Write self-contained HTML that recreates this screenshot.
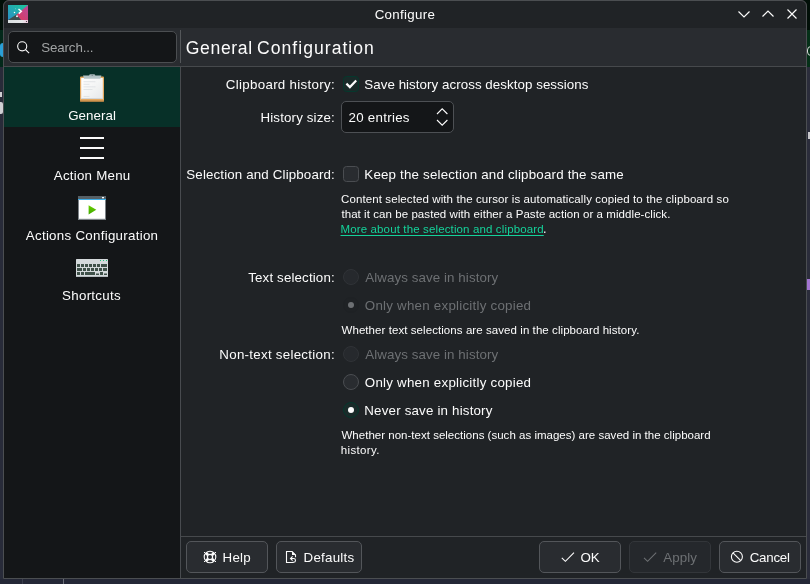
<!DOCTYPE html>
<html lang="en"><head><meta charset="utf-8"><title>Configure</title>
<style>
html,body{margin:0;padding:0;}
body{width:810px;height:584px;position:relative;overflow:hidden;background:#262938;font-family:"Liberation Sans",sans-serif;}
.abs{position:absolute;}
.t{position:absolute;white-space:pre;line-height:20px;height:20px;font-family:"Liberation Sans",sans-serif;}
#win{position:absolute;left:3px;top:0;width:804px;height:579px;background:#202326;border-radius:6px 6px 0 0;overflow:hidden;}
#winborder{position:absolute;left:3px;top:0;width:802px;height:577px;border:1px solid #4b4e51;border-radius:6px 6px 0 0;pointer-events:none;}
#titlebar{position:absolute;left:0;top:0;width:804px;height:28px;background:#202326;}
#header{position:absolute;left:0;top:28px;width:804px;height:38px;background:#292c30;}
#hsep{position:absolute;left:0;top:66px;width:804px;height:1px;background:#46494c;}
#sidebar{position:absolute;left:1px;top:67px;width:176px;height:511px;background:#141618;}
#sel{position:absolute;left:1px;top:67px;width:176px;height:60px;background:#073028;}
#vsep{position:absolute;left:177px;top:67px;width:1px;height:511px;background:#484b4f;}
#vsep2{position:absolute;left:177px;top:30px;width:1px;height:33px;background:#54575a;}
#search{position:absolute;left:5px;top:31px;width:167px;height:30px;border:1px solid #4b4e51;border-radius:5px;background:#141618;}
#fsep{position:absolute;left:178px;top:536px;width:626px;height:1px;background:#46494c;}
.btn{position:absolute;top:541px;height:30px;border:1px solid #53565a;border-radius:5px;background:#292c30;}
.btn.dis{border-color:#33363a;background:#25282c;}
.cb{position:absolute;width:14px;height:14px;border:1px solid #4a4d51;border-radius:3.5px;background:#292c30;}
.cb.on{border-color:#05382d;background:#1a2a29;}
.rb{position:absolute;width:14px;height:14px;border:1px solid #4a4d51;border-radius:50%;background:#292c30;}
.rb.on{border-color:#05382d;background:#1a2a29;}
.rb.dis{border-color:#303337;background:#26292d;}
.rb.dison{border-color:#1e2124;background:#1f2225;}
.dot{position:absolute;left:4px;top:4px;width:6px;height:6px;border-radius:50%;background:#fcfcfc;}
.dison .dot{background:#6d7073;}
#spin{position:absolute;left:341px;top:101px;width:111px;height:30px;border:1px solid #4d5054;border-radius:5px;background:#141618;}
svg{position:absolute;overflow:visible;}
#txt{position:absolute;left:0;top:0;width:810px;height:584px;will-change:transform;}

</style></head>
<body>
<!-- desktop strips -->
<div class="abs" style="left:0;top:0;width:810px;height:30px;background:#010f08"></div>
<div class="abs" style="left:0;top:30px;width:4px;height:37px;background:#03281a"></div>
<div class="abs" style="left:0;top:43px;width:3px;height:14px;background:#2a9fd6;border-radius:3px 0 0 3px"></div>
<div class="abs" style="left:0;top:67px;width:4px;height:512px;background:#282b39"></div>
<div class="abs" style="left:0;top:92px;width:2px;height:5px;background:#cfcfd3"></div>
<div class="abs" style="left:0;top:102px;width:3px;height:12px;background:#cfcfd3;border-radius:0 2px 2px 0"></div>

<div class="abs" style="left:806px;top:30px;width:4px;height:37px;background:#053018"></div>
<div class="abs" style="left:806px;top:67px;width:4px;height:512px;background:#2b2d3b"></div>
<div class="abs" style="left:807px;top:279px;width:3px;height:11px;background:#a274d2"></div>
<div class="abs" style="left:807px;top:46px;width:6px;height:8px;border:1.5px solid #dcdcdc;border-radius:4px"></div>
<div class="abs" style="left:808px;top:132px;width:2px;height:7px;background:#c8c8cc"></div>
<div class="abs" style="left:805px;top:579px;width:1px;height:5px;background:#5a5d68"></div>
<div class="abs" style="left:0;top:579px;width:810px;height:5px;background:#242736"></div>
<div class="abs" style="left:22px;top:579px;width:1px;height:5px;background:#3a3d4c"></div>
<div class="abs" style="left:63px;top:579px;width:1px;height:5px;background:#6a6d78"></div>

<div id="win">
  <div id="titlebar"></div>
  <div id="header"></div>
  <div id="hsep"></div>
  <div id="sidebar"></div>
  <div id="sel"></div>
  <div id="vsep"></div>
  <div id="vsep2"></div>
  <div id="search"></div>
  <div id="fsep"></div>
</div>
<div id="winborder"></div>

<!-- app icon -->
<svg style="left:8px;top:5px" width="20" height="18" viewBox="0 0 20 18">
  <defs>
    <linearGradient id="gt" x1="0" y1="1" x2="1" y2="0"><stop offset="0" stop-color="#2b8fc8"/><stop offset="1" stop-color="#1cc79a"/></linearGradient>
    <linearGradient id="gm" x1="0" y1="1" x2="1" y2="0"><stop offset="0" stop-color="#e0385a"/><stop offset="1" stop-color="#b84a9c"/></linearGradient>
    <linearGradient id="gb" x1="0" y1="0" x2="1" y2="0"><stop offset="0" stop-color="#d9dfe0"/><stop offset="0.7" stop-color="#e6e9ea"/><stop offset="1" stop-color="#f0c8e0"/></linearGradient>
  </defs>
  <rect x="0" y="0" width="20" height="15" fill="url(#gt)"/>
  <polygon points="20,0 20,15 13,15 7.5,10.5" fill="url(#gm)"/>
  <polygon points="0,15 8.5,9.6 13,15" fill="#3e4f50"/>
  <rect x="0" y="15" width="20" height="3" fill="url(#gb)"/>
  <circle cx="18.5" cy="16.5" r="0.6" fill="#333"/>
  <polyline points="10.5,4 13.3,6.2 10.8,8.6" fill="none" stroke="#fff" stroke-width="1.5"/>
  <circle cx="6.5" cy="7.6" r="0.75" fill="#fff"/>
  <circle cx="9" cy="11.2" r="0.95" fill="#fff"/>
  <circle cx="7.5" cy="3.8" r="0.5" fill="#fff" opacity="0.4"/>
</svg>

<!-- titlebar buttons -->
<svg style="left:0;top:0" width="810" height="28" viewBox="0 0 810 28" fill="none" stroke="#fcfcfc" stroke-width="1.15">
  <polyline points="738.5,11.5 744,17 749.5,11.5"/>
  <polyline points="762.5,16.5 768,11 773.5,16.5"/>
  <path d="M787.5 9.5 L796.5 18.5 M796.5 9.5 L787.5 18.5"/>
</svg>

<!-- search icon -->
<svg style="left:0;top:0" width="60" height="70" viewBox="0 0 60 70" fill="none" stroke="#fcfcfc" stroke-width="1.1">
  <circle cx="22.2" cy="46.3" r="4.55"/>
  <path d="M25.5 49.6 L29.1 53.2"/>
</svg>

<!-- sidebar icons -->
<!-- clipboard -->
<svg style="left:76px;top:72px" width="32" height="32" viewBox="0 0 32 32">
  <defs>
    <linearGradient id="pap" x1="0" y1="0" x2="1" y2="1"><stop offset="0" stop-color="#ffffff"/><stop offset="0.5" stop-color="#f4f5f5"/><stop offset="1" stop-color="#e6e8e9"/></linearGradient>
  </defs>
  <rect x="4" y="4.5" width="24" height="25" rx="1" fill="#e5a960"/>
  <rect x="4" y="28.5" width="24" height="1.2" fill="#bb8342"/>
  <rect x="5.2" y="6" width="21.6" height="21" fill="url(#pap)"/>
  <rect x="5.2" y="26" width="21.6" height="1" fill="#d3d6d8"/>
  <path d="M7 3.6 h18.4 l-1.1 3.2 h-16.2z" fill="#b4c3c6"/>
  <rect x="13.2" y="2.2" width="6" height="2.4" rx="1.2" fill="#a9b8bb"/>
  <circle cx="16.2" cy="3.3" r="0.6" fill="#6a7a7d"/>
  <rect x="7.5" y="9.3" width="12" height="0.9" fill="#dfe2e4"/>
  <rect x="7.5" y="11.8" width="6" height="0.9" fill="#dfe2e4"/>
  <rect x="7.5" y="14.4" width="12" height="0.9" fill="#dfe2e4"/>
  <rect x="7.5" y="17" width="9" height="0.9" fill="#dfe2e4"/>
  <rect x="7.5" y="24" width="6" height="0.9" fill="#dfe2e4"/>
</svg>
<!-- hamburger -->
<div class="abs" style="left:80px;top:137px;width:24px;height:2px;background:#fcfcfc"></div>
<div class="abs" style="left:80px;top:147px;width:24px;height:2px;background:#fcfcfc"></div>
<div class="abs" style="left:80px;top:157px;width:24px;height:2px;background:#fcfcfc"></div>
<!-- actions window -->
<svg style="left:78px;top:196px" width="28" height="24" viewBox="0 0 28 24">
  <defs><linearGradient id="pl" x1="0" y1="0" x2="0" y2="1"><stop offset="0" stop-color="#6ad000"/><stop offset="1" stop-color="#3fa800"/></linearGradient></defs>
  <rect x="0" y="0" width="28" height="24" fill="#7d8388"/>
  <rect x="0" y="0" width="28" height="3" fill="#566066"/>
  <rect x="0" y="3" width="28" height="1" fill="#3daee9"/>
  <rect x="1" y="4" width="26" height="19" fill="#ffffff"/>
  <rect x="1" y="22" width="26" height="1" fill="#e4e6e7"/>
  <rect x="24" y="1" width="2" height="1.3" fill="#fff"/>
  <polygon points="10.6,9.2 18.3,13.8 10.6,18.4" fill="url(#pl)"/>
</svg>
<!-- keyboard -->
<svg style="left:76px;top:259px" width="32" height="18" viewBox="0 0 32 18">
  <rect x="0" y="0" width="32" height="18" rx="0.5" fill="#d4d9db"/>
  <rect x="0" y="17" width="32" height="1" fill="#b5bcbf"/>
  <g fill="#1fc77a"><rect x="24" y="1" width="1" height="1"/><rect x="27" y="1" width="1" height="1"/><rect x="30" y="1" width="1" height="1"/></g>
  <g fill="#3f5149">
    <rect x="1" y="5" width="3" height="3"/><rect x="5" y="5" width="3" height="3"/><rect x="9" y="5" width="3" height="3"/><rect x="13" y="5" width="3" height="3"/><rect x="17" y="5" width="3" height="3"/><rect x="21" y="5" width="3" height="3"/><rect x="25" y="5" width="6" height="3"/>
    <rect x="1" y="9" width="5" height="3"/><rect x="7" y="9" width="3" height="3"/><rect x="11" y="9" width="3" height="3"/><rect x="15" y="9" width="3" height="3"/><rect x="19" y="9" width="3" height="3"/><rect x="23" y="9" width="3" height="3"/><rect x="27" y="9" width="4" height="3"/>
    <rect x="1" y="13" width="3" height="3"/><rect x="5" y="13" width="3" height="3"/><rect x="9" y="13" width="10" height="3"/><rect x="20" y="14.5" width="3" height="1.5"/><rect x="24" y="13" width="3" height="3"/><rect x="28" y="14.5" width="3" height="1.5"/>
  </g>
</svg>

<!-- form controls -->
<div class="cb on" style="left:343px;top:76px"></div>
<svg style="left:343px;top:76px" width="16" height="16" viewBox="0 0 16 16" fill="none" stroke="#fcfcfc" stroke-width="2.2"><polyline points="3.4,7.6 6.9,11.1 13.2,4.6"/></svg>
<div id="spin"></div>
<svg style="left:430px;top:101px" width="24" height="32" viewBox="0 0 24 32" fill="none" stroke="#fcfcfc" stroke-width="1.1">
  <polyline points="7,13 12.2,7.8 17.4,13"/>
  <polyline points="7,19 12.2,24.2 17.4,19"/>
</svg>
<div class="cb" style="left:343px;top:166px"></div>
<div class="rb dis" style="left:343px;top:269px"></div>
<div class="rb dison" style="left:343px;top:297px"><div class="dot"></div></div>
<div class="rb dis" style="left:343px;top:346px"></div>
<div class="rb" style="left:343px;top:374px"></div>
<div class="rb on" style="left:343px;top:402px"><div class="dot"></div></div>

<!-- buttons -->
<div class="btn" style="left:186px;width:80px"></div>
<div class="btn" style="left:276px;width:84px"></div>
<div class="btn" style="left:539px;width:80px"></div>
<div class="btn dis" style="left:629px;width:80px"></div>
<div class="btn" style="left:719px;width:80px"></div>
<svg style="left:0;top:540px" width="810" height="36" viewBox="0 540 810 36" fill="none" stroke="#fcfcfc" stroke-width="1.1">
  <!-- help -->
  <circle cx="210" cy="557" r="5.8"/>
  <circle cx="210" cy="557" r="2.6" stroke-width="1.2"/>
  <g stroke-width="2.7"><path d="M212 555 L214 553 M208 555 L206 553 M212 559 L214 561 M208 559 L206 561"/></g>
  <g fill="#fcfcfc" stroke="none"><rect x="204" y="552" width="1" height="1"/><rect x="215" y="552" width="1" height="1"/><rect x="204" y="561" width="1" height="1"/><rect x="215" y="561" width="1" height="1"/></g>
  <!-- defaults -->
  <path d="M293.5 562.5 H286.5 V551.5 H292 L295.5 555 V557.2"/>
  <polygon points="292,551.3 295.8,555.1 292,555.1" fill="#fcfcfc" stroke="none"/>
  <path d="M290.6 558.5 H293.6 a1.9 1.9 0 0 1 0 3.8 H292.6 M292.6 556.4 L290.5 558.5 L292.6 560.6"/>
  <!-- ok -->
  <polyline points="561.8,557.8 565.4,561.3 574,552.7"/>
  <!-- apply -->
  <polyline points="644,557.8 647.6,561.3 656.2,552.7" stroke="#6d7073"/>
  <!-- cancel -->
  <circle cx="736.9" cy="556.8" r="5.5"/>
  <path d="M733 552.9 L740.8 560.7"/>
</svg>

<div id="txt">
<span class="t" style="left:374.66px;top:5px;font-size:13.33px;letter-spacing:0.313px;color:#fcfcfc;">Configure</span>
<span class="t" style="left:41.30px;top:38px;font-size:13.33px;letter-spacing:-0.147px;color:#a1a3a4;">Search...</span>
<span class="t" style="left:185.80px;top:38px;font-size:17.6px;letter-spacing:0.616px;word-spacing:-1.2px;color:#fcfcfc">General <span style="letter-spacing:1.017px">Configuration</span></span>
<span class="t" style="left:68.16px;top:106px;font-size:13.33px;letter-spacing:0.073px;color:#fcfcfc;">General</span>
<span class="t" style="left:53.80px;top:166px;font-size:13.33px;letter-spacing:0.230px;color:#fcfcfc;">Action Menu</span>
<span class="t" style="left:25.80px;top:226px;font-size:13.33px;letter-spacing:0.275px;color:#fcfcfc;">Actions Configuration</span>
<span class="t" style="left:62.10px;top:286px;font-size:13.33px;letter-spacing:0.275px;color:#fcfcfc;">Shortcuts</span>
<span class="t" style="left:225.86px;top:75px;font-size:13.33px;letter-spacing:0.296px;color:#fcfcfc;">Clipboard history:</span>
<span class="t" style="left:364.30px;top:75px;font-size:13.33px;letter-spacing:0.053px;color:#fcfcfc;">Save history across desktop sessions</span>
<span class="t" style="left:260.50px;top:108px;font-size:13.33px;letter-spacing:0.143px;color:#fcfcfc;">History size:</span>
<span class="t" style="left:348.49px;top:108px;font-size:13.33px;letter-spacing:0.279px;color:#fcfcfc;">20 entries</span>
<span class="t" style="left:186.30px;top:165px;font-size:13.33px;letter-spacing:0.143px;color:#fcfcfc;">Selection and Clipboard:</span>
<span class="t" style="left:364.30px;top:165px;font-size:13.33px;letter-spacing:0.189px;color:#fcfcfc;">Keep the selection and clipboard the same</span>
<span class="t" style="left:341.07px;top:189px;font-size:11.5px;letter-spacing:0.099px;color:#fcfcfc;">Content selected with the cursor is automatically copied to the clipboard so</span>
<span class="t" style="left:341.41px;top:204px;font-size:11.5px;letter-spacing:0.064px;color:#fcfcfc;">that it can be pasted with either a Paste action or a middle-click.</span>
<span class="t" style="left:340.50px;top:219px;font-size:11.5px;letter-spacing:0.133px;color:#14d29a;text-decoration:underline;text-underline-offset:1.5px;">More about the selection and clipboard</span>
<span class="t" style="left:543.00px;top:219px;font-size:12.5px;letter-spacing:0.000px;color:#fcfcfc;">.</span>
<span class="t" style="left:248.27px;top:268px;font-size:13.33px;letter-spacing:0.139px;color:#fcfcfc;">Text selection:</span>
<span class="t" style="left:365.30px;top:268px;font-size:13.33px;letter-spacing:0.081px;color:#6d7073;">Always save in history</span>
<span class="t" style="left:364.82px;top:296px;font-size:13.33px;letter-spacing:0.238px;color:#6d7073;">Only when explicitly copied</span>
<span class="t" style="left:341.50px;top:320px;font-size:11.5px;letter-spacing:0.069px;color:#fcfcfc;">Whether text selections are saved in the clipboard history.</span>
<span class="t" style="left:219.30px;top:345px;font-size:13.33px;letter-spacing:0.273px;color:#fcfcfc;">Non-text selection:</span>
<span class="t" style="left:365.30px;top:345px;font-size:13.33px;letter-spacing:0.081px;color:#6d7073;">Always save in history</span>
<span class="t" style="left:364.82px;top:373px;font-size:13.33px;letter-spacing:0.238px;color:#fcfcfc;">Only when explicitly copied</span>
<span class="t" style="left:364.30px;top:401px;font-size:13.33px;letter-spacing:0.183px;color:#fcfcfc;">Never save in history</span>
<span class="t" style="left:341.50px;top:425px;font-size:11.5px;letter-spacing:0.013px;color:#fcfcfc;">Whether non-text selections (such as images) are saved in the clipboard</span>
<span class="t" style="left:340.84px;top:440px;font-size:11.5px;letter-spacing:0.344px;color:#fcfcfc;">history.</span>
<span class="t" style="left:222.60px;top:548px;font-size:13.33px;letter-spacing:0.200px;color:#fcfcfc;">Help</span>
<span class="t" style="left:303.50px;top:548px;font-size:13.33px;letter-spacing:0.253px;color:#fcfcfc;">Defaults</span>
<span class="t" style="left:580.52px;top:548px;font-size:13.33px;letter-spacing:-0.195px;color:#fcfcfc;">OK</span>
<span class="t" style="left:663.20px;top:548px;font-size:13.33px;letter-spacing:0.090px;color:#6d7073;">Apply</span>
<span class="t" style="left:749.66px;top:548px;font-size:13.33px;letter-spacing:-0.232px;color:#fcfcfc;">Cancel</span>
</div>
</body></html>
